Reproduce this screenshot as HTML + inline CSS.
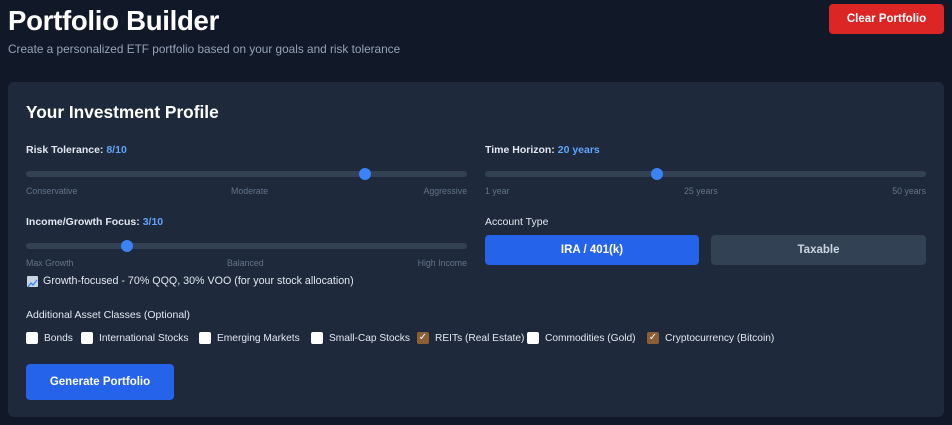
<!DOCTYPE html>
<html><head><meta charset="utf-8"><style>
*{box-sizing:border-box;margin:0;padding:0}
body{width:952px;height:425px;background:#111827;font-family:"Liberation Sans",sans-serif;color:#e2e8f0;position:relative;overflow:hidden}
.a{position:absolute;white-space:nowrap}
h1{position:absolute;left:8px;top:5px;font-size:27.6px;font-weight:700;color:#fff;letter-spacing:-0.3px}
.sub{left:8px;top:42px;font-size:11.8px;color:#94a3b8}
.clear{left:829px;top:4px;width:115px;height:30px;background:#dc2626;border-radius:4px;color:#fff;font-size:11.5px;font-weight:700;text-align:center;line-height:31px}
.card{left:8px;top:82px;width:936px;height:335px;background:#1e293b;border-radius:6px}
.h2{left:26px;top:102px;font-size:17.3px;font-weight:700;color:#fff}
.lbl{font-size:10.5px;font-weight:700;color:#e2e8f0}
.lbl b{color:#60a5fa}
.track{height:6px;background:#334155;border-radius:3px}
.thumb{width:12px;height:12px;border-radius:6px;background:#3b82f6}
.tk{font-size:8.8px;color:#64748b}
.btn{border-radius:4px;text-align:center;font-size:11.5px;font-weight:700;color:#fff}
.cb{top:332px;width:12px;height:12px;background:#fff;border-radius:2px}
.cb.on{background:#8b5e34;color:#fff;font-size:10px;line-height:12px;text-align:center}
.ct{top:333px;font-size:10.2px;color:#e2e8f0}
</style></head><body>
<h1>Portfolio Builder</h1>
<div class="a sub">Create a personalized ETF portfolio based on your goals and risk tolerance</div>
<div class="a clear">Clear Portfolio</div>
<div class="a card"></div>
<div class="a h2">Your Investment Profile</div>

<div class="a lbl" style="left:26px;top:144px">Risk Tolerance: <b>8/10</b></div>
<div class="a track" style="left:26px;top:171px;width:441px"></div>
<div class="a thumb" style="left:359px;top:168px"></div>
<div class="a tk" style="left:26px;top:186px">Conservative</div>
<div class="a tk" style="left:231px;top:186px">Moderate</div>
<div class="a tk" style="right:485px;top:186px">Aggressive</div>

<div class="a lbl" style="left:485px;top:144px">Time Horizon: <b>20 years</b></div>
<div class="a track" style="left:485px;top:171px;width:441px"></div>
<div class="a thumb" style="left:651px;top:168px"></div>
<div class="a tk" style="left:485px;top:186px">1 year</div>
<div class="a tk" style="left:684px;top:186px">25 years</div>
<div class="a tk" style="right:26px;top:186px">50 years</div>

<div class="a lbl" style="left:26px;top:216px">Income/Growth Focus: <b>3/10</b></div>
<div class="a track" style="left:26px;top:243px;width:441px"></div>
<div class="a thumb" style="left:121px;top:240px"></div>
<div class="a tk" style="left:26px;top:258px">Max Growth</div>
<div class="a tk" style="left:227px;top:258px">Balanced</div>
<div class="a tk" style="right:485px;top:258px">High Income</div>
<div class="a" style="left:27px;top:276px;width:11px;height:11px;background:#cbd5e1;border-radius:1px"><svg width="11" height="11" viewBox="0 0 11 11"><polyline points="1,9 4,5 6,7 10,2" fill="none" stroke="#3b82f6" stroke-width="1.3"/></svg></div>
<div class="a" style="left:43px;top:275px;font-size:10.7px;color:#e2e8f0">Growth-focused - 70% QQQ, 30% VOO (for your stock allocation)</div>

<div class="a lbl" style="left:485px;top:216px;font-weight:400">Account Type</div>
<div class="a btn" style="left:485px;top:235px;width:214px;height:30px;line-height:31px;background:#2563eb">IRA / 401(k)</div>
<div class="a btn" style="left:711px;top:235px;width:215px;height:30px;line-height:31px;background:#334155;color:#cbd5e1">Taxable</div>

<div class="a lbl" style="left:26px;top:309px;font-weight:400">Additional Asset Classes (Optional)</div>
<div class="a cb" style="left:26px"></div><div class="a ct" style="left:44px">Bonds</div>
<div class="a cb" style="left:81px"></div><div class="a ct" style="left:99px">International Stocks</div>
<div class="a cb" style="left:199px"></div><div class="a ct" style="left:217px">Emerging Markets</div>
<div class="a cb" style="left:311px"></div><div class="a ct" style="left:329px">Small-Cap Stocks</div>
<div class="a cb on" style="left:417px">✓</div><div class="a ct" style="left:435px">REITs (Real Estate)</div>
<div class="a cb" style="left:527px"></div><div class="a ct" style="left:545px">Commodities (Gold)</div>
<div class="a cb on" style="left:647px">✓</div><div class="a ct" style="left:665px">Cryptocurrency (Bitcoin)</div>

<div class="a btn" style="left:26px;top:364px;width:148px;height:36px;line-height:37px;background:#2563eb">Generate Portfolio</div>
</body></html>
